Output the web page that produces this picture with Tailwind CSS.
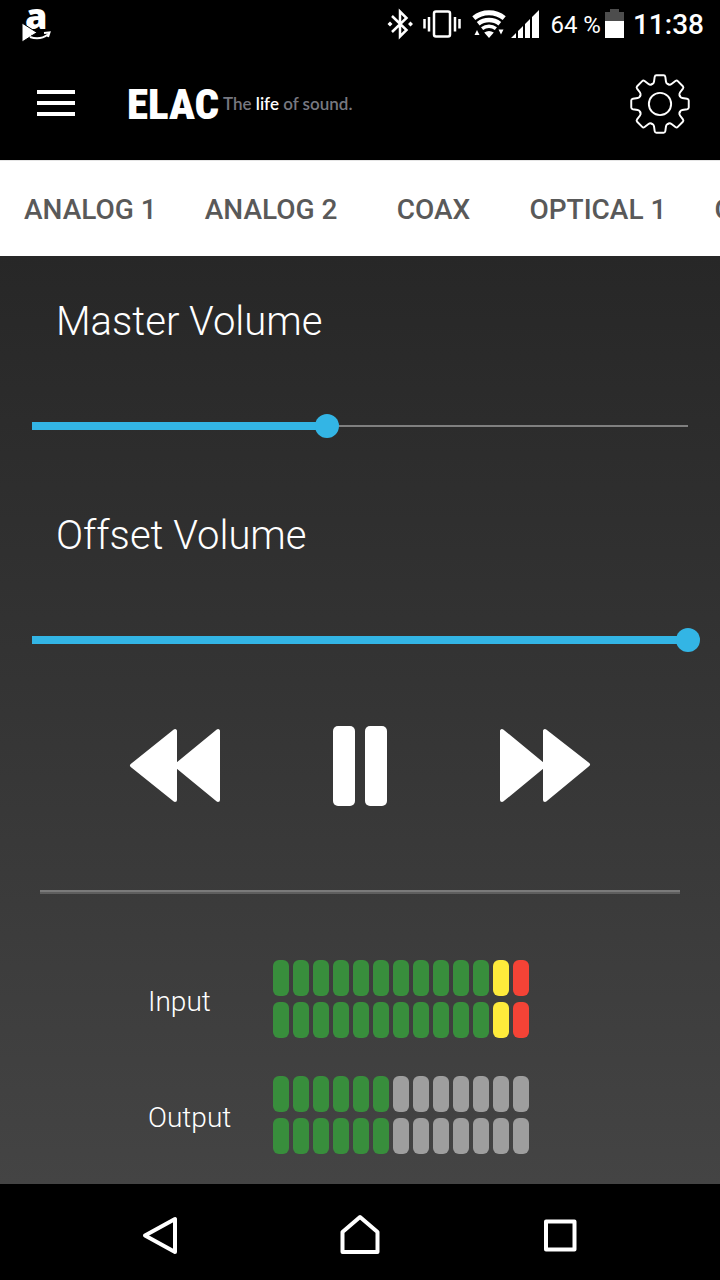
<!DOCTYPE html>
<html lang="en">
<head>
<meta charset="utf-8">
<meta name="viewport" content="width=device-width, initial-scale=1">
<title>ELAC</title>
<script src="https://cdn.jsdelivr.net/npm/@tailwindcss/browser@4"></script>
</head>
<body class="flex min-h-screen flex-col overflow-x-hidden bg-black font-[Roboto,sans-serif] text-white">

<div class="flex h-12 items-center justify-between pr-4 pl-5">
  <svg class="h-12 w-8 overflow-visible" viewBox="0 0 32 48" fill="#fff" role="img" aria-label="Amazon app notification">
    <text x="5" y="29" font-family="Open Sans, sans-serif" font-weight="800" font-size="36">a</text>
    <path d="M2 23L17 32.500L2 42Z" stroke="#000" stroke-width="1"/>
    <path d="M11 37Q20 40 28 34" fill="none" stroke="#000" stroke-width="5"/>
    <path d="M10 37Q20 40.500 28 34.500M24 33L29.500 32.500L28 37" fill="none" stroke="#fff" stroke-width="2"/>
  </svg>
  <div class="flex items-center">
    <svg class="h-10 w-40" viewBox="0 0 160 40" fill="none" stroke="#fff" role="img" aria-label="Bluetooth on, vibrate, Wi-Fi, mobile signal">
      <path d="M12 12L26.500 26L20 32.500V7.500L26.500 14L12 28" stroke-width="2.500"/>
      <path d="M7.500 20L10 17.500L12.500 20L10 22.500ZM28 20L30.500 17.500L33 20L30.500 22.500Z" fill="#fff" stroke="none"/>
      <rect x="54" y="7.500" width="16" height="25" rx="2" stroke-width="2.500"/>
      <path d="M44.500 15V24.500M49 13V27.500M75 13V27.500M79.500 15V24.500" stroke-width="2.500"/>
      <path d="M93.800 14.100A24.700 24.700 0 0 1 124.200 14.100" stroke-width="5"/>
      <path d="M98.200 19.800A17.500 17.500 0 0 1 119.800 19.800" stroke-width="4.500"/>
      <path d="M102.100 24.600A11.300 11.300 0 0 1 115.900 24.600" stroke-width="3.500"/>
      <path d="M104.200 28.500Q109 25.500 113.800 28.500L109 34ZM94.500 31L97 26L99.500 31ZM118.500 25.500H123.500L121 30.500Z" fill="#fff" stroke="none"/>
      <path d="M131 34L136 29V34ZM138 27L143 22V34H138ZM145 20L150 15V34H145ZM152 13L159 6V34H152Z" fill="#fff" stroke="none"/>
    </svg>
    <span class="ml-2.5 pt-0.5 text-[24px]">64 %</span>
    <svg class="ml-1 h-10 w-5" viewBox="0 0 20 40" role="img" aria-label="Battery"><path d="M0 21V8H5V5H14V8H19V21Z" fill="#4d4d4d"/><path d="M0 17H19V34H0Z" fill="#fff"/></svg>
    <time class="ml-2 pt-0.5 text-[28px] font-medium">11:38</time>
  </div>
</div>

<header class="flex h-28 items-center pr-[30px] pl-9">
  <button type="button" aria-label="Menu" class="flex w-10 justify-center">
    <svg class="h-8 w-10" viewBox="0 0 40 32" fill="#fff"><path d="M1 2H39V6H1ZM1 13H39V17H1ZM1 24H39V28H1Z"/></svg>
  </button>
  <a href="#" class="ml-[51px] flex items-center whitespace-nowrap">
    <span class="w-24 font-['Roboto_Condensed','Liberation_Sans_Narrow',sans-serif] text-[43px] leading-none font-black">ELAC</span>
    <span class="font-[Lato,sans-serif] text-[17px] font-semibold text-[#777880]">The <span class="text-white">life</span> of sound.</span>
  </a>
  <button type="button" aria-label="Settings" class="ml-auto">
    <svg class="size-[60px]" viewBox="-31 -31 62 62" fill="none" stroke="#fff" stroke-width="2" stroke-linecap="round">
      <defs><path id="tooth" d="M-8.600-20.300Q-6.500-21-6.200-23L-5.500-28Q-5.200-29.700-3.700-29.700H3.700Q5.200-29.700 5.500-28L6.200-23Q6.500-21 8.600-20.300"/></defs>
      <circle r="11.500"/>
      <use href="#tooth"/><use href="#tooth" transform="rotate(45)"/><use href="#tooth" transform="rotate(90)"/><use href="#tooth" transform="rotate(135)"/>
      <use href="#tooth" transform="rotate(180)"/><use href="#tooth" transform="rotate(225)"/><use href="#tooth" transform="rotate(270)"/><use href="#tooth" transform="rotate(315)"/>
    </svg>
  </button>
</header>

<nav aria-label="Inputs" class="flex h-24 overflow-hidden border-t border-[#e5e5e5] bg-white pt-0.5 text-[28px] font-medium whitespace-nowrap text-[#595959]">
  <button type="button" class="min-w-36 shrink-0 px-6">ANALOG 1</button>
  <button type="button" class="min-w-36 shrink-0 px-6">ANALOG 2</button>
  <button type="button" class="min-w-36 shrink-0 px-6">COAX</button>
  <button type="button" class="min-w-36 shrink-0 px-6">OPTICAL 1</button>
  <button type="button" class="min-w-36 shrink-0 px-6">OPTICAL 2</button>
</nav>

<main class="flex-1 bg-linear-to-b from-[#272727] to-[#444444] pt-[34px] pb-[30px]">
  <div class="px-5">
    <label for="master" class="block pl-9 text-[40px] leading-[64px] font-light">Master Volume</label>
    <input id="master" type="range" min="0" max="100" value="45" style="--level:0.45" class="mt-[60px] block h-6 w-full appearance-none bg-[linear-gradient(#33b5e5,#33b5e5),linear-gradient(#808080,#808080)] bg-[length:calc((100%_-_24px)*var(--level))_8px,calc(100%_-_24px)_2px] bg-[position:12px_center,12px_center] bg-no-repeat [&::-webkit-slider-thumb]:size-6 [&::-webkit-slider-thumb]:appearance-none [&::-webkit-slider-thumb]:rounded-full [&::-webkit-slider-thumb]:bg-[#33b5e5]">
  </div>
  <div class="mt-[66px] px-5">
    <label for="offset" class="block pl-9 text-[40px] leading-[64px] font-light">Offset Volume</label>
    <input id="offset" type="range" min="0" max="100" value="100" style="--level:1" class="mt-[60px] block h-6 w-full appearance-none bg-[linear-gradient(#33b5e5,#33b5e5),linear-gradient(#808080,#808080)] bg-[length:calc((100%_-_24px)*var(--level))_8px,calc(100%_-_24px)_2px] bg-[position:12px_center,12px_center] bg-no-repeat [&::-webkit-slider-thumb]:size-6 [&::-webkit-slider-thumb]:appearance-none [&::-webkit-slider-thumb]:rounded-full [&::-webkit-slider-thumb]:bg-[#33b5e5]">
  </div>

  <div class="mx-auto mt-[74px] grid max-w-[555px] grid-cols-3 justify-items-center">
    <button type="button" aria-label="Previous">
      <svg class="h-20 w-24" viewBox="0 0 96 80" fill="#fff" stroke="#fff" stroke-width="4" stroke-linejoin="round"><path d="M5 39.500L48 5V74ZM49 39.500L91 5V74Z"/></svg>
    </button>
    <button type="button" aria-label="Pause">
      <svg class="h-20 w-14" viewBox="0 0 56 80" fill="#fff"><rect x="1" width="22" height="80" rx="5"/><rect x="33" width="22" height="80" rx="5"/></svg>
    </button>
    <button type="button" aria-label="Next">
      <svg class="h-20 w-24" viewBox="0 0 96 80" fill="#fff" stroke="#fff" stroke-width="4" stroke-linejoin="round"><path d="M91 38.500L48 5V74ZM47 39.500L5 5V74Z"/></svg>
    </button>
  </div>

  <hr class="mx-10 mt-[84px] h-1 border-0 border-t-2 border-[#7a7a7a] bg-[#5e5e5e]">

  <div class="mt-[66px] flex flex-col gap-[38px] text-[28px] font-light">
    <div class="flex items-center">
      <span id="input-label" class="w-[273px] shrink-0 pt-1.5 pl-[148px]">Input</span>
      <div role="meter" aria-labelledby="input-label" aria-valuemin="0" aria-valuemax="13" aria-valuenow="13" data-level="13" class="grid grid-cols-[repeat(13,16px)] gap-x-1 gap-y-[6px]"></div>
    </div>
    <div class="flex items-center">
      <span id="output-label" class="w-[273px] shrink-0 pt-1.5 pl-[148px]">Output</span>
      <div role="meter" aria-labelledby="output-label" aria-valuemin="0" aria-valuemax="13" aria-valuenow="6" data-level="6" class="grid grid-cols-[repeat(13,16px)] gap-x-1 gap-y-[6px]"></div>
    </div>
  </div>
</main>

<nav aria-label="System" class="h-24">
  <div class="mx-auto grid h-full max-w-[600px] grid-cols-3 place-items-center pt-2">
    <button type="button" aria-label="Back"><svg class="size-12" viewBox="0 0 48 48" fill="none" stroke="#fff" stroke-width="4" stroke-linejoin="round"><path d="M9 23.500L39 7V40Z"/></svg></button>
    <button type="button" aria-label="Home"><svg class="size-12" viewBox="0 0 48 48" fill="none" stroke="#fff" stroke-width="4" stroke-linejoin="round"><path d="M6.500 20L24 5L41.500 20V40H6.500Z"/></svg></button>
    <button type="button" aria-label="Recent apps"><svg class="size-12" viewBox="0 0 48 48" fill="none" stroke="#fff" stroke-width="4" stroke-linejoin="round"><path d="M10 9.500H38.500V37.500H10Z"/></svg></button>
  </div>
</nav>

<script>
  // Each meter shows two channels of thirteen segments.
  document.querySelectorAll('[role=meter]').forEach(function (meter) {
    var level = Number(meter.dataset.level);
    for (var i = 0; i < 26; i++) {
      var n = i % 13;
      var bar = document.createElement('span');
      bar.className = n >= level ? 'h-9 rounded-md bg-[#9e9e9e]'
        : n === 12 ? 'h-9 rounded-md bg-[#f44336]'
        : n === 11 ? 'h-9 rounded-md bg-[#ffeb3b]'
        : 'h-9 rounded-md bg-[#388e3c]';
      meter.appendChild(bar);
    }
  });
  document.querySelectorAll('input[type=range]').forEach(function (slider) {
    slider.addEventListener('input', function () {
      slider.style.setProperty('--level', slider.value / 100);
    });
  });
</script>
</body>
</html>
